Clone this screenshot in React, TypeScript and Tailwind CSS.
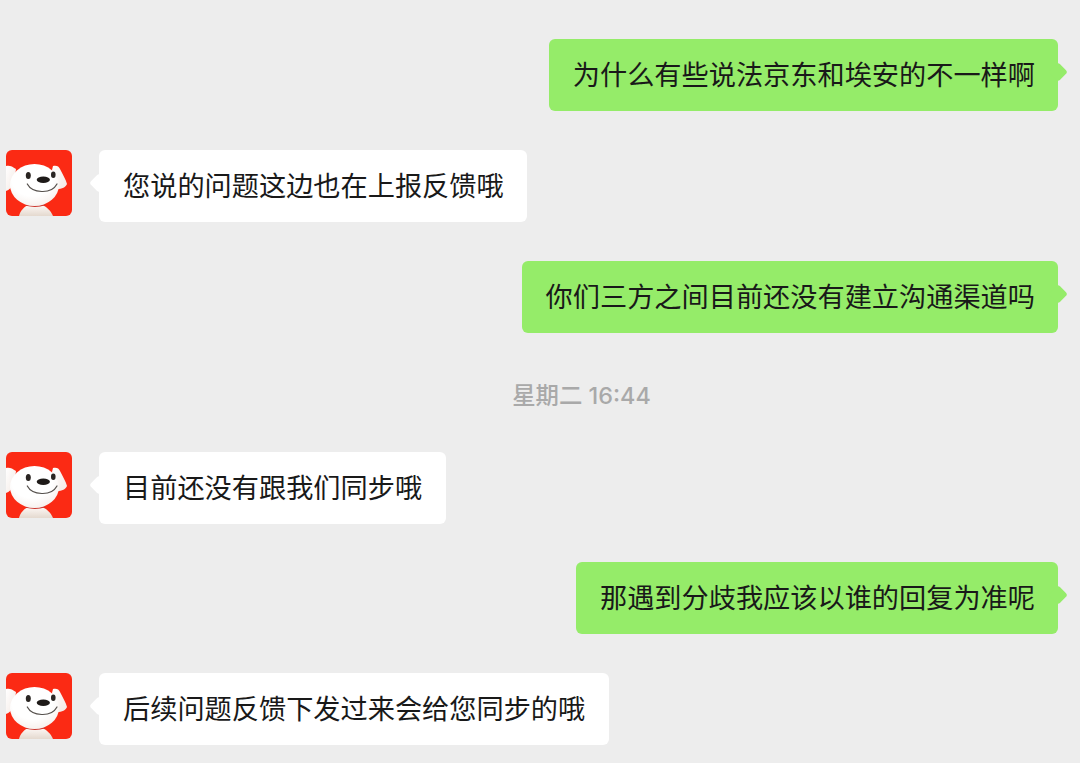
import React from "react";

const font = { fontFamily: '"Noto Sans CJK SC", sans-serif' };

function Avatar() {
  return (
    <div className="w-[66px] h-[66px] shrink-0 rounded-[6px] overflow-hidden bg-[#fb2a14]">
      <svg viewBox="0 0 66 66" width="66" height="66" className="block blur-[0.4px]">
        <defs>
          <radialGradient id="head" cx="0.45" cy="0.35" r="0.75">
            <stop offset="0.55" stopColor="#ffffff" />
            <stop offset="0.85" stopColor="#f8f2ef" />
            <stop offset="1" stopColor="#ece2dd" />
          </radialGradient>
          <linearGradient id="body" x1="0" y1="0" x2="0" y2="1">
            <stop offset="0" stopColor="#fdf8f5" />
            <stop offset="1" stopColor="#e4d9cf" />
          </linearGradient>
          <linearGradient id="ear" x1="0" y1="0" x2="1" y2="1">
            <stop offset="0" stopColor="#ffffff" />
            <stop offset="1" stopColor="#f3e9e4" />
          </linearGradient>
        </defs>
        <path d="M13 66 C14 61 18 57 22 55 L36 55 C41 57 45 61 47 66Z" fill="url(#body)" />
        <path d="M20 55 Q30 57.5 39 54.5" stroke="#c9322a" strokeWidth="1.6" fill="none" />
        <path d="M0 16 C3 15 6 16 10 19 L8 34 C6 37 3 40 0 41Z" fill="url(#ear)" />
        <path d="M47 16 C50 15 53 16 54 19 C57 25 60 30 61 34 C60 37 56 39 51 39 L46 20Z" fill="url(#ear)" />
        <ellipse cx="28.5" cy="35" rx="24.5" ry="21" fill="url(#head)" />
        <ellipse cx="22.3" cy="25.5" rx="2.5" ry="3.5" fill="#2a2522" />
        <ellipse cx="47.3" cy="24.7" rx="2.3" ry="3.3" fill="#2a2522" />
        <ellipse cx="37.3" cy="29.7" rx="6.6" ry="3.2" fill="#1e1a18" />
        <path d="M21.3 34 C26 43 45 45 51 34" stroke="#55504c" strokeWidth="1.2" fill="none" strokeLinecap="round" />
      </svg>
    </div>
  );
}

function Left({ text }: { text: string }) {
  return (
    <div className="flex items-start pl-[6px] gap-[27px] h-[72px]">
      <Avatar />
      <div className="relative h-[72px] flex items-center bg-white rounded-[6px] pl-[24px] pr-[23.5px] pb-[3px] whitespace-nowrap text-[27.2px] text-[#191919]">
        <span className="absolute left-[-7px] top-[26px] w-[14px] h-[14px] rotate-45 rounded-[3px] bg-white" />
        <span className="relative">{text}</span>
      </div>
    </div>
  );
}

function Right({ text }: { text: string }) {
  return (
    <div className="flex justify-end pr-[22px] h-[72px]">
      <div className="relative h-[72px] flex items-center bg-[#95ec69] rounded-[6px] pl-[23.6px] pr-[23px] pb-[3px] whitespace-nowrap text-[27.2px] text-[#191919]">
        <span className="absolute right-[-7px] top-[26px] w-[14px] h-[14px] rotate-45 rounded-[3px] bg-[#95ec69]" />
        <span className="relative">{text}</span>
      </div>
    </div>
  );
}

export default function App() {
  return (
    <div style={font} className="w-[1080px] h-[763px] overflow-hidden bg-[#ededed] flex flex-col pt-[39px]">
      <div className="flex flex-col gap-[39px]">
        <Right text="为什么有些说法京东和埃安的不一样啊" />
        <Left text="您说的问题这边也在上报反馈哦" />
        <Right text="你们三方之间目前还没有建立沟通渠道吗" />
      </div>
      <div className="h-[119px] flex items-center justify-center pl-[83px] pt-[7px] text-[23.4px] font-medium text-[#a9a9a9]">
        <span style={{ fontFamily: 'Inter, "Noto Sans CJK SC", sans-serif' }}>星期二 16:44</span>
      </div>
      <div className="flex flex-col gap-[38.4px]">
        <Left text="目前还没有跟我们同步哦" />
        <Right text="那遇到分歧我应该以谁的回复为准呢" />
        <Left text="后续问题反馈下发过来会给您同步的哦" />
      </div>
    </div>
  );
}
